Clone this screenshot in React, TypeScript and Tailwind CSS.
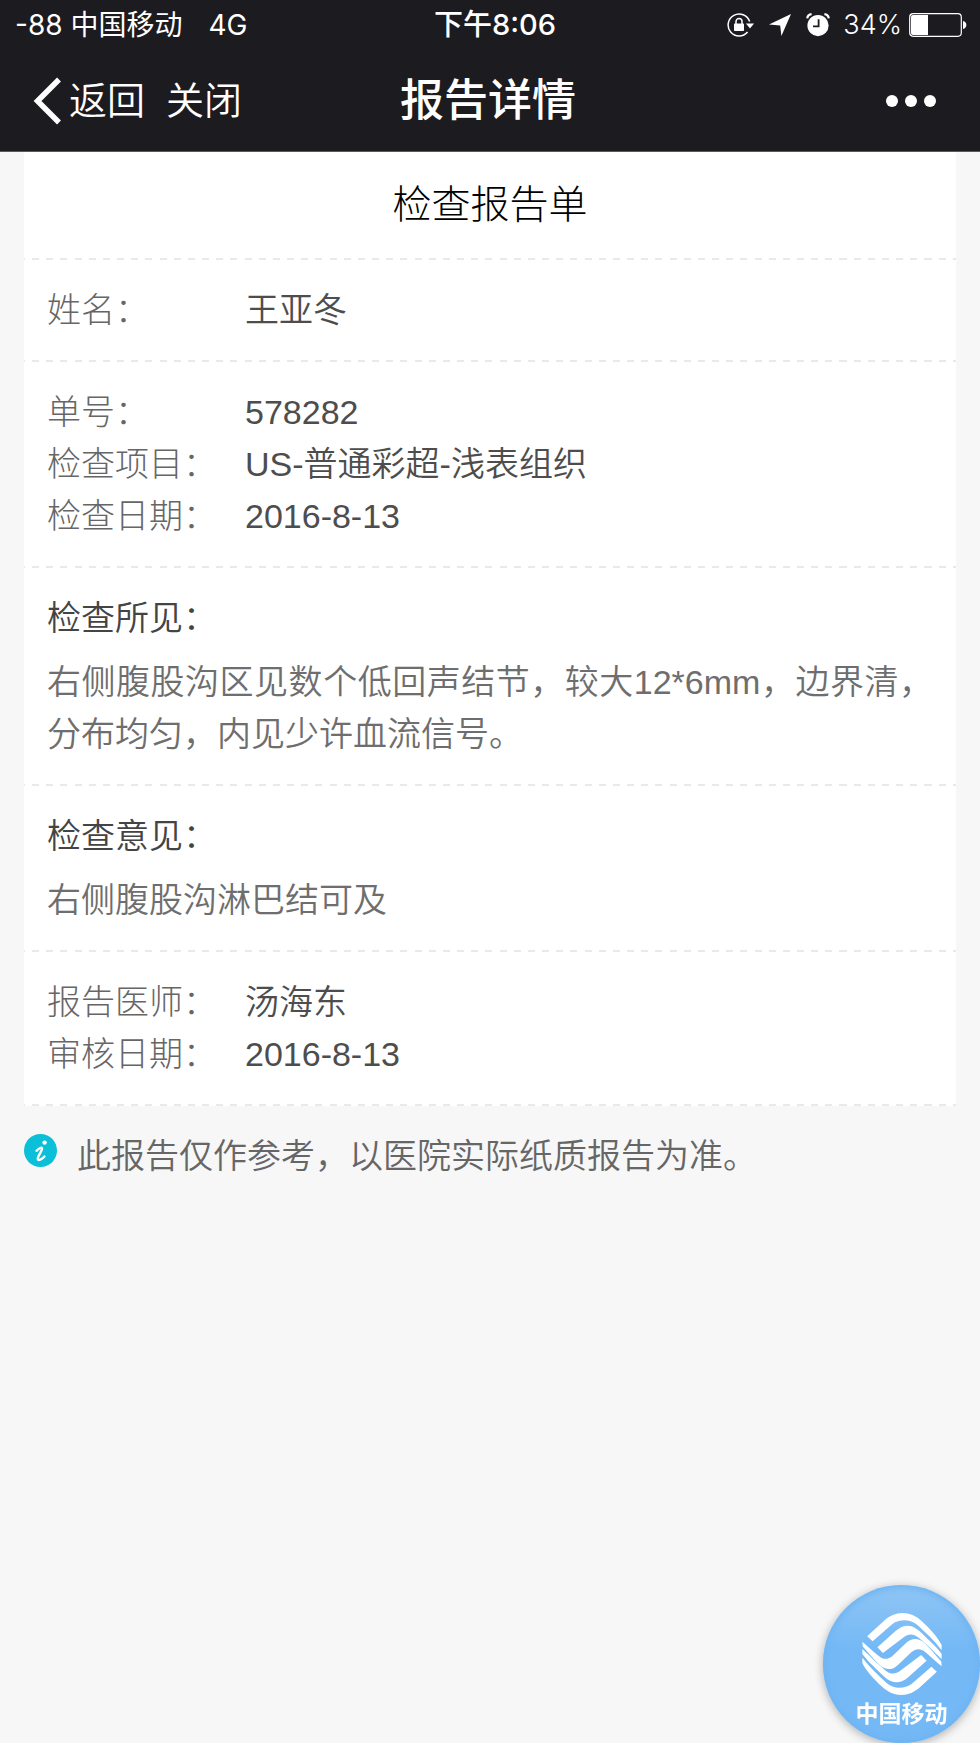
import type { ReactNode } from 'react';

interface IRowProps {
  label: string;
  value: string;
}

interface ISectionProps {
  children: ReactNode;
}

const Divider: React.FC = () => (
  <div className="h-0.5 bg-[repeating-linear-gradient(90deg,#e9e9e9_0_0.1%,transparent_0.1%_0.86%,#e9e9e9_0.86%_1.52%)]" />
);

const Section: React.FC<ISectionProps> = ({ children }) => (
  <>
    <section className="px-[23px] py-6">{children}</section>
    <Divider />
  </>
);

const Row: React.FC<IRowProps> = ({ label, value }) => (
  <div className="flex">
    <dt className="w-[198px] shrink-0 font-light text-[#666]">{label}</dt>
    <dd className="text-[#4d4d4d]">{value}</dd>
  </div>
);

const StatusBar: React.FC = () => (
  <div className="grid h-[50px] grid-cols-[1fr_auto_1fr] items-center pl-[15px] pr-[13px] font-['Inter','Noto_Sans_CJK_SC',sans-serif] text-[28px] leading-[50px]">
    <div className="flex gap-[26px] font-normal">
      <span>-88 中国移动</span>
      <span>4G</span>
    </div>
    <span className="pl-2 text-[29px] font-medium">下午8:06</span>
    <div className="flex items-center justify-end">
      <svg className="mr-[15px] h-6 w-[27px]" viewBox="0 0 27 24" fill="none">
        <path
          d="M22.6 8.6A11 11 0 1 0 20.6 19"
          stroke="white"
          strokeWidth="1.5"
        />
        <path d="M19 10.6h8l-4 5z" fill="white" />
        <rect x="7" y="10.5" width="10" height="7.5" rx="0.8" fill="white" />
        <path
          d="M9 11V8.6a3 3 0 0 1 6 0V11"
          stroke="white"
          strokeWidth="1.5"
        />
      </svg>
      <svg className="mr-[15px] h-[22px] w-[22px]" viewBox="0 0 22 22" fill="white">
        <path d="M22 0 12.4 22 11.2 11.4 0 10.4z" />
      </svg>
      <svg className="mr-[13px] h-6 w-6" viewBox="0 0 24 24" fill="none">
        <circle cx="12" cy="12.6" r="10.6" fill="white" />
        <path
          d="M1.2 5.4A5 5 0 0 1 5.6 1.2M22.8 5.4a5 5 0 0 0-4.4-4.2"
          stroke="white"
          strokeWidth="2.2"
        />
        <path d="M12.6 6.2v7.2H7" stroke="#1c1b20" strokeWidth="1.8" />
      </svg>
      <span className="mr-[7px] text-[27px]">34%</span>
      <svg className="h-6 w-[58px]" viewBox="0 0 58 24" fill="none">
        <rect
          x="0.7"
          y="0.7"
          width="51.6"
          height="22.6"
          rx="3.5"
          stroke="white"
          strokeWidth="1.2"
        />
        <path d="M4 2h15v20H4a2 2 0 0 1-2-2V4a2 2 0 0 1 2-2z" fill="white" />
        <path d="M54 8c4.5 1 4.5 7 0 8z" fill="white" />
      </svg>
    </div>
  </div>
);

const NavBar: React.FC = () => (
  <nav className="grid h-[101px] grid-cols-[1fr_auto_1fr] items-center pl-8 pr-9">
    <div className="flex items-center gap-[21px] text-[38px] font-[350]">
      <button type="button" className="flex items-center gap-2">
        <svg className="h-12 w-[29px]" viewBox="0 0 29 48" fill="none">
          <path d="M27 2.5 5.5 24 27 45.5" stroke="white" strokeWidth="5.5" />
        </svg>
        返回
      </button>
      <button type="button">关闭</button>
    </div>
    <h1 className="text-[44px] font-medium">报告详情</h1>
    <button type="button" aria-label="更多" className="mr-2 justify-self-end">
      <svg className="h-3 w-[50px]" viewBox="0 0 50 12" fill="white">
        <circle cx="6" cy="6" r="6" />
        <circle cx="25" cy="6" r="6" />
        <circle cx="44" cy="6" r="6" />
      </svg>
    </button>
  </nav>
);

const MobileBadge: React.FC = () => (
  <button
    type="button"
    className="fixed bottom-0 right-0 flex h-[158px] w-[157px] flex-col items-center rounded-full bg-linear-to-b from-[#90c5f4] to-[#74b9f6] to-40% pt-7 text-white shadow-[0_2px_10px_rgba(0,0,0,0.3),inset_0_0_6px_3px_#6fb4f2]"
  >
    <svg className="size-[82px]" viewBox="12 12 240 240" fill="white">
      <path d="M30 80 78 36C112 4 156 4 190 36 212 56 238 84 248 106V121C226 92 200 68 178 48 156 28 124 30 104 44L46 95z" />
      <path d="M60 112 114 64C136 44 160 44 182 64 208 88 234 112 248 132V147C226 126 200 100 180 84 166 72 150 72 138 82L76 129z" />
      <path d="M16 96C34 112 50 126 64 138 78 150 92 148 104 138L144 100C160 84 180 84 196 98 214 114 232 138 247 154L248 168C230 152 214 138 200 126 186 114 172 116 160 126L120 164C104 180 84 180 68 166 50 150 32 126 17 110z" />
      <g transform="rotate(180 132 132)">
        <path d="M30 80 78 36C112 4 156 4 190 36 212 56 238 84 248 106V121C226 92 200 68 178 48 156 28 124 30 104 44L46 95z" />
        <path d="M60 112 114 64C136 44 160 44 182 64 208 88 234 112 248 132V147C226 126 200 100 180 84 166 72 150 72 138 82L76 129z" />
      </g>
    </svg>
    <span className="mt-0.5 text-[23px] font-bold leading-[34px]">中国移动</span>
  </button>
);

const App: React.FC = () => (
  <div className="min-h-screen bg-[#f7f7f7] font-['Liberation_Sans','Noto_Sans_CJK_SC',sans-serif] text-[34px] font-[350] leading-[52px]">
    <header className="border-b border-[#5a5a5e] bg-[#1c1b20] text-white">
      <StatusBar />
      <NavBar />
    </header>

    <main className="px-6">
      <article className="bg-white">
        <h2 className="py-6 text-center text-[39px] font-light leading-[58px] text-black">
          检查报告单
        </h2>
        <Divider />

        <Section>
          <dl>
            <Row label="姓名：" value="王亚冬" />
          </dl>
        </Section>

        <Section>
          <dl>
            <Row label="单号：" value="578282" />
            <Row label="检查项目：" value="US-普通彩超-浅表组织" />
            <Row label="检查日期：" value="2016-8-13" />
          </dl>
        </Section>

        <Section>
          <h3 className="mb-3 text-[#444]">检查所见：</h3>
          <p className="text-justify text-[#6e6e6e]">
            右侧腹股沟区见数个低回声结节，较大12*6mm，边界清，分布均匀，内见少许血流信号。
          </p>
        </Section>

        <Section>
          <h3 className="mb-3 text-[#444]">检查意见：</h3>
          <p className="text-justify text-[#6e6e6e]">右侧腹股沟淋巴结可及</p>
        </Section>

        <Section>
          <dl>
            <Row label="报告医师：" value="汤海东" />
            <Row label="审核日期：" value="2016-8-13" />
          </dl>
        </Section>
      </article>

      <div className="flex items-start gap-5 pt-6 text-[#666]">
        <svg className="mt-1 size-[33px] shrink-0" viewBox="0 0 33 33">
          <circle cx="16.5" cy="16.5" r="16.5" fill="#0bbfd8" />
          <circle cx="20.6" cy="8.6" r="2.2" fill="white" />
          <path
            d="M12.6 16.8c2-2.4 4.6-3.6 5.4-2.8 1.2 1.4-4.6 8-4.2 11 .3 2 4 .6 6.6-2.6"
            fill="none"
            stroke="white"
            strokeWidth="2.4"
            strokeLinecap="round"
          />
        </svg>
        <p>此报告仅作参考，以医院实际纸质报告为准。</p>
      </div>
    </main>

    <MobileBadge />
  </div>
);

export default App;
